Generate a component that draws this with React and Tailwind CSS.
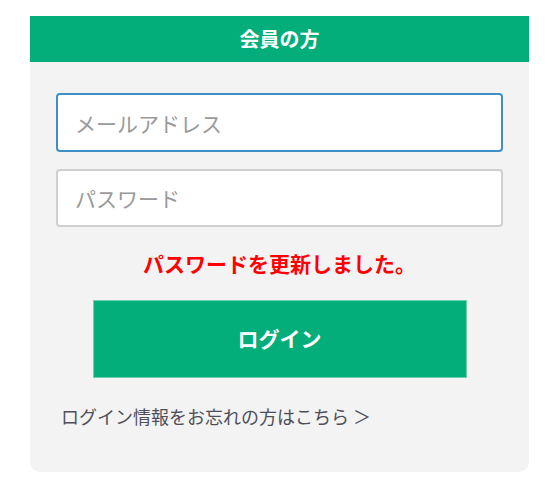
import React, { useState } from "react";

const App = () => {
    const [email, setEmail] = useState("");
    const [password, setPassword] = useState("");

    return (
        <div className="min-h-[487px] bg-white pt-[16px] font-['Noto_Sans_CJK_JP','Noto_Sans',sans-serif]">
            <div className="ml-[30px] w-[499px] rounded-b-[10px] bg-[#f3f3f3] pb-[44px]">
                {/* header */}
                <div className="flex h-[46px] items-center justify-center bg-[#03ae7b]">
                    <h2 className="text-[20px] font-bold leading-none text-white">会員の方</h2>
                </div>

                <div className="px-[26px] pt-[31px]">
                    <input
                        type="text"
                        value={email}
                        onChange={(e) => setEmail(e.target.value)}
                        placeholder="メールアドレス"
                        className="block h-[59px] w-full rounded-[4px] border-2 border-[#3d8fc6] bg-white px-[17px] text-[21px] text-[#333] outline-none placeholder:text-[#9a9a9a]"
                    />
                    <input
                        type="password"
                        value={password}
                        onChange={(e) => setPassword(e.target.value)}
                        placeholder="パスワード"
                        className="mt-[17px] block h-[58px] w-full rounded-[4px] border-2 border-[#cfcfcf] bg-white px-[17px] text-[21px] text-[#333] outline-none placeholder:text-[#9a9a9a]"
                    />

                    <p className="mt-[22px] text-center text-[21px] font-bold leading-[28px] text-[#ff0000]">
                        パスワードを更新しました。
                    </p>

                    <div className="mt-[23px] flex justify-center">
                        <button className="h-[78px] w-[374px] border border-[#6fd0b0] bg-[#03ae7b] text-[21px] font-bold text-white">
                            ログイン
                        </button>
                    </div>

                    <a href="#" className="mt-[26px] block pl-[5px] text-[18px] leading-[24px] text-[#4f4f5a]">
                        ログイン情報をお忘れの方はこちら ＞
                    </a>
                </div>
            </div>
        </div>
    );
};

export default App;
